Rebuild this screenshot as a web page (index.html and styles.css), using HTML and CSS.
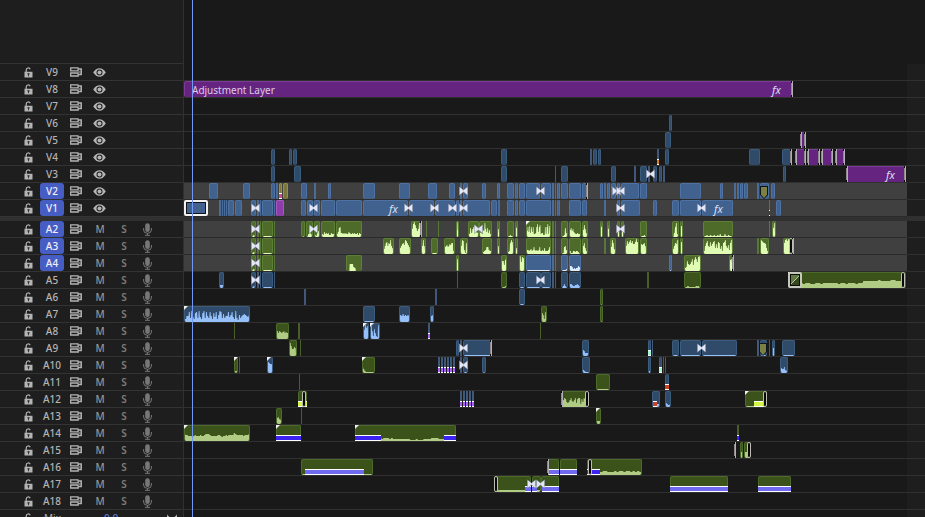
FILE: index.html
```html
<!DOCTYPE html>
<html lang="en">
<head>
    <meta charset="UTF-8">
    <meta name="viewport" content="width=device-width, initial-scale=1.0">
    <title>Sequence Timeline</title>
    <link rel="stylesheet" href="styles.css">
</head>
<body>

  <!-- Icon shapes used by the track headers -->
  <svg class="sprite" aria-hidden="true">
    <symbol id="lock" viewBox="0 0 9 11">
      <path d="M2.200 5.200V3a2.100 2.100 0 0 1 4-.8" fill="none" stroke="currentColor" stroke-width="1.200"/>
      <path fill-rule="evenodd" d="M.5 4.700h8v5.900h-8zM3.500 6.300v1.300h.6v1.700h.8V7.600h.6V6.300z" fill="currentColor"/>
    </symbol>
    <symbol id="sync" viewBox="0 0 13 10">
      <path d="M8 .9H.7v3h7.500zM8 6H.7v3h7.500z" fill="none" stroke="currentColor" stroke-width="1.300"/>
      <path d="M8.200 2h3v5.500h-3M9.500 4.600v1" fill="none" stroke="currentColor" stroke-width="1.500"/>
    </symbol>
    <symbol id="eye" viewBox="0 0 13 9">
      <path fill-rule="evenodd" d="M.2 4.500Q3 .3 6.500.3t6.300 4.200Q10 8.700 6.500 8.700T.2 4.500zM3.500 4.500a3 3 0 1 0 6 0a3 3 0 1 0-6 0z" fill="currentColor"/>
      <circle cx="6.500" cy="4.500" r="2" fill="currentColor"/>
    </symbol>
    <symbol id="mic" viewBox="0 0 9 13">
      <rect x="2.200" y=".2" width="4.600" height="8.800" rx="2.300" fill="currentColor"/>
      <path d="M.6 5v2a3.900 3.300 0 0 0 7.800 0V5M4.500 10.200v2M2 12.300h5" fill="none" stroke="currentColor" stroke-width="1"/>
    </symbol>
    <symbol id="bowtie" viewBox="0 0 9 10">
      <path d="M.3.600l4.200 3.400 4.200-3.400v8.800l-4.200-3.400-4.200 3.400z" fill="#e2e6f6" stroke="#2b3954" stroke-width=".3"/>
    </symbol>
    <symbol id="fit" viewBox="0 0 12 9">
      <path d="M1 .5v8l4-4zM11 .5v8l-4-4z" fill="currentColor"/>
    </symbol>
  </svg>

  <main class="timeline">
    <div class="track spacer">
      <div class="head"></div>
      <div class="lane"></div>
      <div class="gutter"></div>
    </div>
    <div class="tracks" id="videoTracks"></div>
    <div class="divider"></div>
    <div class="tracks" id="audioTracks"></div>

    <!-- Mix track -->
    <div class="track">
      <div class="head">
        <button class="icon-btn" aria-label="Lock Mix"><svg class="icon-lock"><use href="#lock"/></svg></button>
        <span class="mix-name">Mix</span>
        <a class="mix-level" href="#mix">0.0</a>
        <button class="icon-btn mix-fit" aria-label="Expand Mix"><svg class="icon-fit"><use href="#fit"/></svg></button>
      </div>
      <div class="lane"></div>
      <div class="gutter"></div>
    </div>

    <div class="playhead"></div>
  </main>

  <script src="script.js"></script>
</body>
</html>
```
FILE: styles.css
```css
/* General Page Styling */
* {
  box-sizing: border-box;
}

body {
  margin: 0;
  background: #1e1e1e;
  color: #b4b4b4;
  font-family: "Noto Sans", "Open Sans", sans-serif;
  font-size: 10px;
  line-height: 16px;
}

button {
  padding: 0;
  border: 0;
  background: none;
  color: inherit;
  font: inherit;
  cursor: pointer;
}

svg {
  display: block;
}

.sprite {
  position: absolute;
  width: 0;
  height: 0;
}

/* Timeline */
.timeline {
  position: relative;
  height: 100vh;
  overflow: hidden;
}

.track {
  display: flex;
  height: 17px;
}

.head {
  display: flex;
  align-items: center;
  flex: none;
  width: 184px;
  padding-left: 24px;
  border-right: 1px solid #303030;
  border-bottom: 1px solid #333333;
}

.lane {
  position: relative;
  flex: 1;
  background: #191919;
  border-bottom: 1px solid #303030;
}

.lane.target {
  background: #404040;
  border-bottom-color: #2b2b2b;
}

.gutter {
  flex: none;
  width: 18px;
  border-bottom: 1px solid #303030;
}

.spacer {
  height: 64px;
}

.spacer .lane,
.spacer .gutter {
  background: #191919;
  border-bottom: 0;
}

.divider {
  height: 4px;
  background: #303030;
}

.playhead {
  position: absolute;
  top: 0;
  bottom: 0;
  left: 192px;
  width: 1px;
  background: #7298f5;
}

/* Track Headers */
.icon-btn {
  flex: none;
}

.icon-lock {
  width: 9px;
  height: 11px;
}

.name {
  width: 24px;
  height: 16px;
  margin: 0 6px 0 7px;
  border-radius: 3px;
  font-weight: 500;
}

.name.on {
  background: #465dc4;
  color: #f0f0fa;
}

.icon-sync {
  width: 13px;
  height: 10px;
}

.icon-eye {
  width: 13px;
  height: 9px;
  margin-left: 10px;
}

.letter {
  width: 24px;
  color: #969696;
  font-weight: 500;
}

.letter.mute {
  margin-left: 5px;
}

.letter.solo {
  color: #7c7c7c;
  font-weight: 600;
}

.icon-mic {
  width: 9px;
  height: 13px;
  margin-left: 7px;
  color: #777777;
}

.mix-name {
  width: 60px;
  margin-left: 11px;
}

.mix-level {
  width: 24px;
  color: #6685ea;
  text-decoration: none;
}

.mix-fit {
  margin-left: 38px;
}

.icon-fit {
  width: 12px;
  height: 9px;
}

/* Clips */
.clip {
  position: absolute;
  top: 0;
  height: 16px;
  overflow: hidden;
  border: 1px solid;
  border-bottom-width: 0;
  border-radius: 2px;
}

.clip.thin {
  border-width: 0;
  border-radius: 0;
}

.blue { background: #41628f; border-color: #4d72a3; color: #dcecff; }
.navy { background: #304b69; border-color: #3c5c7e; color: #95c0fa; }
.green { background: #4e6b2a; border-color: #5d7f38; color: #dffbb4; }
.moss { background: #3b531b; border-color: #4c6b2b; color: #afcb84; }
.purple { background: #642480; border-color: #7b3b97; color: #e4d3ee; }
.violet { background: #8c3dab; border-color: #a658c3; }
.olive { background: #7b773b; border-color: #96904c; }

.thin.blue { background: #4a6c99; }
.thin.navy { background: #40597a; }
.thin.green { background: #597838; }
.thin.moss { background: #485f2a; }

.wave {
  position: absolute;
  bottom: 0;
  left: -1px;
  width: calc(100% + 2px);
  height: 16px;
}

.clip-name {
  position: absolute;
  top: 1px;
  left: 8px;
  color: #dccbe6;
}

.selected {
  border: 2px solid #f2f2f2;
  outline: 1px solid #10151c;
  outline-offset: -3px;
}

/* Colored strip along the bottom of a clip */
.bar {
  position: absolute;
  bottom: 0;
  height: 6px;
  border-top: 1px solid #ffffff;
  border-bottom: 1px solid #ffffff;
}

/* Trim handles */
.trim {
  position: absolute;
  top: 0;
  width: 2px;
  height: 16px;
  border-right: 1px solid #b3aeb3;
  background: linear-gradient(#080808 2px, #8f898f 2px, #8f898f 14px, #080808 14px);
}

.trim.wide {
  width: 4px;
  border: 1px solid #bdbdb4;
  border-radius: 2px;
  background: #080808;
}

.corner {
  position: absolute;
  top: 0;
  width: 4px;
  height: 4px;
  background: #f0f0f0;
  clip-path: polygon(0 0, 100% 0, 0 100%);
}

.bowtie {
  position: absolute;
  top: 3px;
  width: 9px;
  height: 10px;
}

.fx {
  position: absolute;
  top: 1px;
  color: #dcdff0;
  font-size: 11px;
  font-style: italic;
}

.marker {
  position: absolute;
  top: 3px;
  width: 8px;
  height: 13px;
  background: #10151c;
  clip-path: polygon(0 0, 100% 0, 100% 70%, 50% 100%, 0 70%);
}

.marker::before {
  content: "";
  position: absolute;
  inset: 1px;
  background: #7d8044;
  clip-path: polygon(0 0, 100% 0, 100% 70%, 50% 100%, 0 70%);
}

.fade {
  position: absolute;
  top: 0;
  width: 14px;
  height: 16px;
  border: 2px solid #c6c8bc;
  border-radius: 2px;
  background: linear-gradient(135deg, #5f7840 46%, #b9c5a5 46%, #b9c5a5 52%, #34481c 52%);
  outline: 1px solid #0c0c0c;
  outline-offset: -3px;
}
```
FILE: script.js
```javascript
// Each clip: [color, start, width, wave, bar]
// wave is one hex digit per sample, bar is [color, offset, width]
const T = '#a864f8', I = '#3b24f0', L = '#6f6af0', Y = '#d5f545', M = '#a5f5d5', R = '#c8432a';

const edit = (c, last) => [[c, 67, 5, last && '2120'], [c, 73, 2], [c, 76, 1], [c, 78, 11, last], [c, 90, 1]];
const stripes = (start, n) => Array.from({ length: n }, (_, i) => ['navy', start + i * 3, 2, '', [T, 0, 2]]);
const thins = c => [[c, 368, 2], [c, 371, 1]];

const video = [
  { name: 'V9' },
  { name: 'V8', clips: [['purple', 0, 609]], label: 'Adjustment Layer', fx: [588], trims: [607] },
  { name: 'V7' },
  { name: 'V6', clips: [['navy', 485, 3]] },
  { name: 'V5', clips: [['navy', 481, 6], ['purple', 616, 6]], trims: [616, 620] },
  { name: 'V4', clips: [['navy', 87, 4], ['navy', 105, 3], ['navy', 109, 4], ['navy', 317, 6], ['navy', 406, 2],
    ['navy', 409, 4], ['navy', 414, 3], ['navy', 473, 2, '', ['#df7b24', 0, 2]], ['navy', 481, 4], ['navy', 565, 11],
    ['navy', 598, 9], ['purple', 611, 11], ['purple', 623, 13], ['purple', 637, 12], ['purple', 651, 10]],
    trims: [606, 611, 620, 623, 634, 637, 647, 651, 659] },
  { name: 'V3', clips: [['navy', 87, 4], ['navy', 110, 7], ['navy', 317, 6], ['navy', 371, 1], ['navy', 377, 7],
    ['navy', 427, 5], ['navy', 450, 2], ['navy', 456, 7], ['navy', 464, 2], ['navy', 469, 4], ['navy', 475, 3],
    ['navy', 479, 2], ['navy', 599, 3], ['purple', 662, 60]], ties: [467], fx: [702], trims: [662, 720] },
  { name: 'V2', on: true, clips: [['blue', 25, 9], ['blue', 59, 7], ['blue', 87, 4], ['blue', 92, 2],
    ['olive', 95, 3, '', ['#cf4798', 0, 3]], ['olive', 99, 5], ['blue', 117, 6], ['blue', 130, 2], ['blue', 144, 3],
    ['blue', 179, 12], ['blue', 215, 11], ['blue', 244, 9], ['blue', 265, 6], ['blue', 276, 2], ['blue', 279, 5],
    ['blue', 298, 4], ['blue', 313, 3], ['blue', 323, 7], ['blue', 331, 3], ['blue', 335, 6], ['blue', 342, 14],
    ['blue', 357, 10], ...thins('blue'), ['blue', 373, 3], ['blue', 377, 7], ['blue', 385, 12], ['blue', 398, 6],
    ['blue', 416, 3], ['blue', 420, 2], ['blue', 423, 3], ['blue', 427, 5], ['blue', 433, 3], ['blue', 437, 18],
    ['blue', 456, 7], ['blue', 496, 21], ['blue', 536, 3], ['blue', 550, 2], ['blue', 553, 2], ['blue', 556, 3],
    ['blue', 560, 4], ['blue', 573, 2], ['blue', 576, 9], ['blue', 587, 4]],
    ties: [280, 357, 433, 437], trims: [402], marks: [576] },
  { name: 'V1', on: true, clips: [['blue selected', 0, 24], ['blue', 35, 2], ['blue', 38, 1], ['blue', 40, 1],
    ['blue', 42, 1], ['blue', 44, 6], ['blue', 51, 7], ...edit('blue', ''), ['violet', 92, 8], ['blue', 117, 5],
    ['blue', 123, 6], ['blue', 130, 6], ['blue', 137, 14], ['blue', 152, 26], ['blue', 179, 45], ['blue', 225, 25],
    ['blue', 251, 20], ['blue', 272, 3], ['blue', 276, 2], ['blue', 279, 27], ['blue', 307, 6], ['blue', 314, 2],
    ['blue', 323, 7], ['blue', 331, 3], ['blue', 335, 6], ['blue', 342, 25], ...thins('blue'), ['blue', 373, 3],
    ['blue', 385, 12], ['blue', 398, 5], ['blue', 420, 2], ['blue', 433, 3], ['blue', 437, 19], ['blue', 469, 4],
    ['blue', 488, 7], ['blue', 496, 21], ['blue', 518, 31], ['blue', 585, 1, '', [I, 0, 1]], ['blue', 592, 5]],
    ties: [72, 130, 225, 251, 269, 280, 437, 518], fx: [205, 530] }
];

const audio = [
  { name: 'A2', on: true, clips: [...edit('green', '1111'), ['green', 117, 4, '0010'], ['green', 122, 7, '213a31'],
    ['green', 130, 6, '521463'], ['green', 137, 14, '43253434224333'], ['green', 152, 26, '3359a4434343354334343342433'],
    ['green', 227, 10, '68dfc968e8'], ['green', 242, 1], ['green', 254, 1], ['green', 272, 3, '27fa'],
    ['green', 284, 11, '23948ac545'], ['green', 295, 13, '245376e8594731'], ['green', 313, 3, '284'],
    ['green', 323, 7, '1112111'], ['green', 331, 3, '39c'], ['green', 342, 25, '36a5b4a5a334ad5ac34422a3ad3b4'],
    ...thins('green'), ['green', 377, 7, '1112941'], ['green', 385, 12, '2796854334334'], ['green', 398, 6, '27c841'],
    ['green', 416, 3, '2ad'], ['green', 423, 3, '38d'], ['green', 433, 3, '27c'], ['green', 437, 3, '4b8'],
    ['green', 456, 7, '1111211'], ['green', 488, 7, '214ae31'], ['green', 496, 3, '8ba'],
    ['green', 519, 30, '1112112112112131113112111'], ['green', 585, 1], ['green', 588, 4, '49e4']],
    ties: [72, 130, 295, 437], trims: [236], corners: [342] },
  { name: 'A3', on: true, clips: [...edit('green', '1111'), ['green', 199, 11, '158bc8bae861'],
    ['green', 215, 12, '368ab9edb973'], ['green', 237, 5, '28e83'], ['green', 247, 7, '1111112'],
    ['green', 260, 11, '278978a9bb31'], ['green', 276, 8, '18ed41b2'], ['green', 298, 10, '223477433'],
    ['green', 313, 3, '284'], ['green', 323, 7, '223bec8'], ['green', 331, 3, '263'],
    ['green', 342, 25, '24434534743434733436333473'], ...thins('green'), ['green', 377, 7, '1117843'],
    ['green', 385, 12, '231133233211'], ['green', 398, 6, '48b631'], ['green', 420, 2], ['green', 426, 6, '27eb52'],
    ['green', 441, 14, '38dacebdaacfcb'], ['green', 456, 7, '3a9ab83'], ['green', 488, 7, '258bae6'],
    ['green', 496, 3, '6cb'], ['green', 519, 30, '138bd87c8acd6a6cb583bce8694be3'], ['green', 573, 2],
    ['green', 576, 9, 'dedcbba631'], ['green', 599, 10, '5befdfe855']], ties: [72], trims: [608], wides: [605] },
  { name: 'A4', on: true, clips: [...edit('green', '1111'), ['green', 162, 16, '0007774300000'], ['green', 272, 3, '3c8'],
    ['green', 317, 6, 'eaa6be'], ['green', 335, 6, 'cf9edb'], ['blue', 342, 25, '11111'], ...thins('blue'),
    ['blue', 377, 7, '2111122'], ['blue', 385, 12, '355423233543'], ['blue', 485, 3, '111'],
    ['green', 500, 17, '134a7679c6bec9efb'], ['green', 545, 5, '3bc84']], ties: [72], trims: [548] },
  { name: 'A5', clips: [['navy', 35, 5, '33333'], ...edit('navy', '1111'), ['moss', 273, 1], ['moss', 317, 6, '211122'],
    ['navy', 335, 6, '11111'], ['navy', 342, 15, '1111'], ['navy', 357, 10, '1111'], ...thins('navy'), ['navy', 377, 7, '1124211'],
    ['navy', 385, 12, '144322334321'], ['moss', 463, 2], ['moss', 500, 17, '1121111221'],
    ['moss', 604, 118, '55556545544554555555455455545577777787777887777']],
    ties: [72, 357], fades: [604], wides: [717], corners: [604] },
  { name: 'A6', clips: [['navy', 120, 2], ['navy', 251, 2], ['navy', 335, 6, '1111'], ['moss', 416, 3, '010']] },
  { name: 'A7', clips: [['navy', 0, 66, '2366a4b539a4b539b4a64a6395a37ba48466a57a53b42746787657'],
    ['navy', 179, 12, '1111'], ['navy', 215, 11, '676867676'], ['navy', 246, 4, '3675'],
    ['moss', 357, 6, '7973a4'], ['moss', 416, 3, '010']], corners: [0] },
  { name: 'A8', clips: [['moss', 50, 1], ['moss', 92, 13, '686876786766'], ['moss', 114, 2], ['navy', 179, 6, '39ebd8'],
    ['navy', 186, 10, 'cd83a632e8'], ['navy', 244, 2, '', [T, 0, 2]], ['moss', 356, 1]], corners: [179, 186] },
  { name: 'A9', clips: [['moss', 105, 8, '4da77982'], ['moss', 116, 1], ['navy', 272, 3], ['navy', 276, 2],
    ['navy', 279, 29, '1111'], ['navy', 398, 7, '4653333'], ['navy', 464, 3, '', [M, 0, 3]], ['navy', 468, 1],
    ['navy', 488, 7, '1111'], ['navy', 496, 21, '1111'], ['navy', 518, 35, '1111'], ['navy', 573, 2],
    ['navy', 576, 7, '1111'], ['navy', 585, 1], ['navy', 588, 3, '688'], ['navy', 598, 13, '1111']],
    ties: [280, 518], trims: [306], marks: [575] },
  { name: 'A10', clips: [['moss', 50, 4, '1223'], ['moss', 55, 1], ['navy', 83, 6, '4ba998'],
    ['moss', 178, 13, '7421111111'], ...stripes(254, 6), ['navy', 276, 2], ['navy', 279, 5, '111'], ['navy', 298, 4, '11'],
    ['navy', 398, 8, '6321111'], ['navy', 464, 3, '222'], ['navy', 475, 3, '', [M, 0, 3]], ['navy', 479, 1],
    ['navy', 481, 1], ['navy', 596, 8, '15446325']], ties: [280], corners: [50, 83, 178] },
  { name: 'A11', clips: [['moss', 115, 1], ['moss', 412, 14, '1111'], ['navy', 481, 4, '', [R, 0, 4]]] },
  { name: 'A12', clips: [['moss', 114, 9, '', [Y, 0, 9]], ...stripes(276, 5),
    ['moss', 377, 27, '2479854579657948993859889'], ['navy', 468, 8, '22222333', [R, 1, 4]],
    ['navy', 481, 6, '443224'], ['moss', 561, 22, '1112223', [Y, 9, 10]]],
    trims: [377], wides: [118, 401, 579], corners: [561] },
  { name: 'A13', clips: [['moss', 92, 6, '467547'], ['moss', 117, 1], ['moss', 412, 5, '3333']], corners: [412] },
  { name: 'A14', clips: [['moss', 0, 66, '8665554565556556777655555665455656666876666656667'], ['moss', 92, 25, '', [I, 0, 25]],
    ['moss', 171, 101, '00000000000323233323222222222111211122223333222200000', [I, 0, 26], [I, 89, 12]],
    ['moss', 553, 2, '', [I, 0, 2]]], corners: [0, 92, 171] },
  { name: 'A15', clips: [['moss', 550, 2], ['moss', 556, 3, 'a66'], ['moss', 560, 7, '5666875']],
    trims: [550], wides: [563] },
  { name: 'A16', clips: [['moss', 117, 72, '1110001', [L, 4, 59]], ['moss', 363, 12, '', [L, 0, 12]],
    ['moss', 376, 17, '', [L, 0, 17]], ['moss', 403, 55, '444443344333434434434343', [I, 0, 13]]],
    trims: [363], wides: [404] },
  { name: 'A17', clips: [['moss', 310, 37, '2222222', [L, 31, 6]], ['moss', 348, 9, '2322', [L, 0, 5]],
    ['moss', 357, 18, '', [L, 1, 17]], ['moss', 486, 58, '', [L, 0, 58]], ['moss', 574, 33, '', [L, 0, 33]]],
    ties: [348, 357], wides: [310] },
  { name: 'A18' }
];

const icon = id => `<svg class="icon-${id}"><use href="#${id}"/></svg>`;

function waveSvg(wave) {
  const n = wave.length;
  const points = [...wave].map((h, i) => {
    const y = 16 - parseInt(h, 16);
    return `${i},${y} ${i + 0.7},${y}`;
  }).join(' ');
  return `<svg class="wave" viewBox="0 0 ${n} 16" preserveAspectRatio="none">
    <polygon points="0,16 ${points} ${n},${16 - parseInt(wave[n - 1], 16)} ${n},16" fill="currentColor"/></svg>`;
}

function clipHtml([color, start, width, wave, ...bars]) {
  const thin = width < 3 ? ' thin' : '';
  const strips = bars.map(([fill, x, w]) =>
    `<div class="bar" style="left:${start + x}px;width:${w}px;background:${fill}"></div>`).join('');
  return `<div class="clip ${color}${thin}" style="left:${start}px;width:${width}px">${wave ? waveSvg(wave) : ''}</div>${strips}`;
}

// Small items drawn over the clips
function overlay(list, cls) {
  return (list || []).map(x => `<div class="${cls}" style="left:${x}px"></div>`).join('');
}

function trackHtml(track, isAudio) {
  const { name } = track;
  const controls = isAudio
    ? `<button class="letter mute" aria-label="Mute ${name}">M</button>
       <button class="letter solo" aria-label="Solo ${name}">S</button>
       <button class="icon-btn" aria-label="Record ${name}">${icon('mic')}</button>`
    : `<button class="icon-btn" aria-label="Show ${name}">${icon('eye')}</button>`;

  return `<div class="track">
    <div class="head">
      <button class="icon-btn" aria-label="Lock ${name}">${icon('lock')}</button>
      <button class="name${track.on ? ' on' : ''}">${name}</button>
      <button class="icon-btn" aria-label="Sync lock ${name}">${icon('sync')}</button>
      ${controls}
    </div>
    <div class="lane${track.on ? ' target' : ''}">
      ${(track.clips || []).map(clipHtml).join('')}
      ${track.label ? `<span class="clip-name">${track.label}</span>` : ''}
      ${(track.fx || []).map(x => `<span class="fx" style="left:${x}px">fx</span>`).join('')}
      ${overlay(track.marks, 'marker')}
      ${overlay(track.corners, 'corner')}
      ${overlay(track.trims, 'trim')}
      ${overlay(track.wides, 'trim wide')}
      ${overlay(track.fades, 'fade')}
      ${(track.ties || []).map(x => `<svg class="bowtie" style="left:${x - 5}px"><use href="#bowtie"/></svg>`).join('')}
    </div>
    <div class="gutter"></div>
  </div>`;
}

document.getElementById('videoTracks').innerHTML = video.map(t => trackHtml(t, false)).join('');
document.getElementById('audioTracks').innerHTML = audio.map(t => trackHtml(t, true)).join('');
```
